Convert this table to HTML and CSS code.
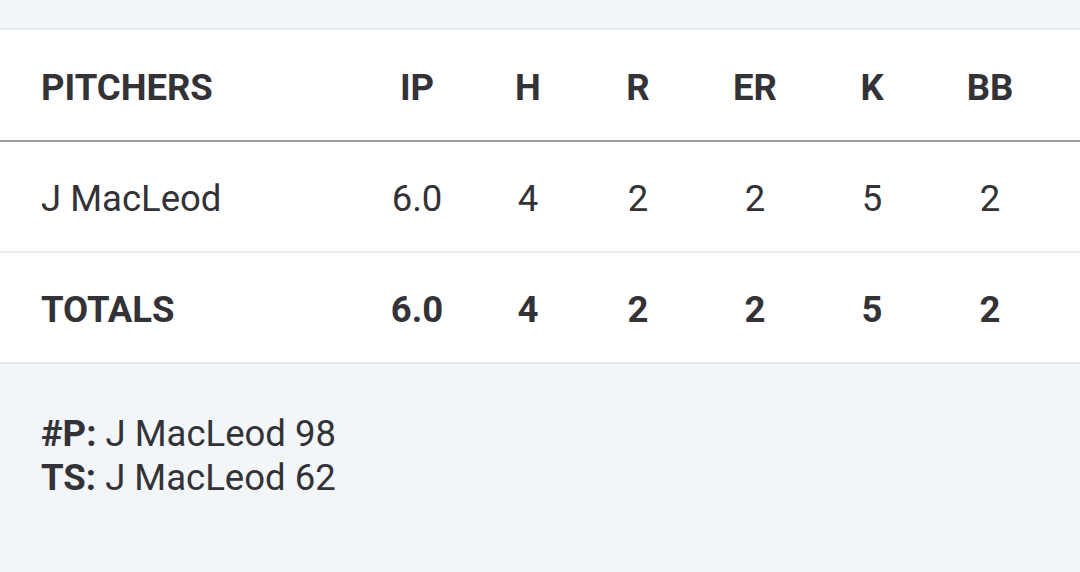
FILE: index.html
```html
<!DOCTYPE html>
<html>
<head>
<meta charset="utf-8">
<link rel="stylesheet" href="styles.css">
</head>
<body>
<div class="page">
  <div class="card">
    <div class="row head">
      <div class="name">PITCHERS</div>
      <div class="stat">IP</div>
      <div class="stat">H</div>
      <div class="stat">R</div>
      <div class="stat">ER</div>
      <div class="stat">K</div>
      <div class="stat">BB</div>
    </div>
    <div class="row body">
      <div class="name">J MacLeod</div>
      <div class="stat">6.0</div>
      <div class="stat">4</div>
      <div class="stat">2</div>
      <div class="stat">2</div>
      <div class="stat">5</div>
      <div class="stat">2</div>
    </div>
    <div class="row totals">
      <div class="name">TOTALS</div>
      <div class="stat">6.0</div>
      <div class="stat">4</div>
      <div class="stat">2</div>
      <div class="stat">2</div>
      <div class="stat">5</div>
      <div class="stat">2</div>
    </div>
  </div>
  <div class="notes">
    <div class="note"><b>#P:</b> J MacLeod 98</div>
    <div class="note"><b>TS:</b> J MacLeod 62</div>
  </div>
</div>
</body>
</html>
```
FILE: styles.css
```css
html, body {
  margin: 0;
  padding: 0;
  background: #f3f6f9;
}
body {
  font-family: Roboto, "Liberation Sans", sans-serif;
  color: #323237;
  width: 1080px;
  height: 572px;
  overflow: hidden;
}
.page {
  padding-top: 28px;
}
.card {
  background: #ffffff;
  border-top: 2px solid #e7e8ea;
  border-bottom: 2px solid #e5e7ea;
}
.row {
  display: grid;
  grid-template-columns: 362px 110px 112px 108px 126px 108px 128px;
  height: 109px;
  align-items: center;
  font-size: 36.5px;
}
.head {
  height: 110px;
  font-weight: 700;
  border-bottom: 2px solid #9b9b9b;
}
.body {
  border-bottom: 2px solid #ebebeb;
}
.totals {
  font-weight: 700;
}
.name,
.stat {
  padding-top: 4px;
}
.name {
  padding-left: 41px;
}
.stat {
  text-align: center;
}
.notes {
  padding: 48px 41px 0;
  font-size: 36.5px;
  line-height: 44px;
}
.note b {
  font-weight: 700;
}
```
